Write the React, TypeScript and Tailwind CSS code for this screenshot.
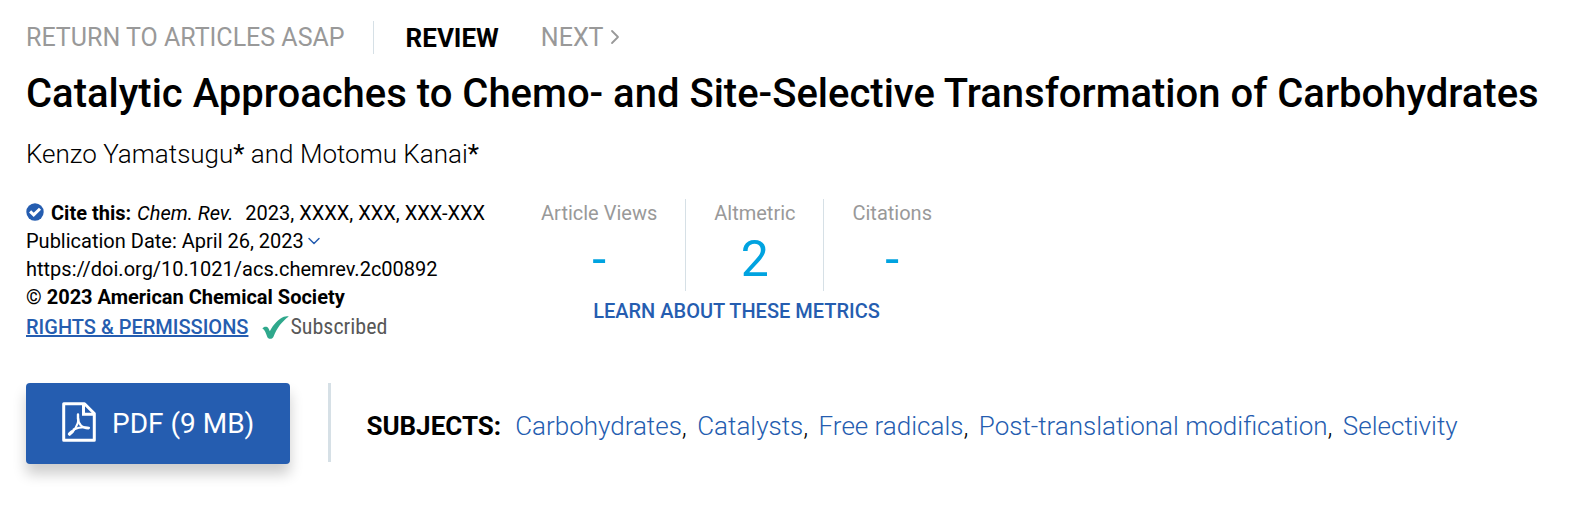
import { ChevronDown, ChevronRight } from "lucide-react";

const subjects = [
  "Carbohydrates",
  "Catalysts",
  "Free radicals",
  "Post-translational modification",
  "Selectivity",
];

const metrics = [
  { label: "Article Views", value: "-" },
  { label: "Altmetric", value: "2" },
  { label: "Citations", value: "-" },
];

const CiteIcon = () => (
  <svg viewBox="0 0 18 18" className="mb-0.5 size-[18px]" aria-hidden="true">
    <circle cx="9" cy="9" r="8.7" fill="#255db0" />
    <path d="M4.1 8.4 7.7 11.900 14 5.700" fill="none" stroke="#fff" strokeWidth="3" />
  </svg>
);

const CheckIcon = () => (
  <svg viewBox="0 0 27 23" className="h-[23px] w-[27px]" aria-hidden="true">
    <path
      d="M.4 12.4C1.6 10.8 3.4 10.2 5.2 11c1.2.7 2 2.4 2.6 4.2C11.500 8.500 16.500 2.900 21.800.8c1.500-.6 3.200-.8 5-.4C20.200 5 14.800 12 11.600 20.400c-.6 1.700-1.800 2.300-3.400 2.300-1.500 0-2.400-.5-3-2C4 17 2.800 13.800.4 12.400Z"
      fill="#2fa88c"
    />
  </svg>
);

const PdfIcon = () => (
  <svg viewBox="0 0 34 40" className="mb-1 h-10 w-[34px]" fill="none" stroke="#fff" aria-hidden="true">
    <path d="M2.500 1.700H22.500L32.300 11.500V38.300H1.700V1.700Z" strokeWidth="3" strokeLinejoin="round" />
    <path d="M21.500 2V12.300H32" strokeWidth="3" />
    <path d="M16 12.500V17C16.400 21.500 19.500 26 26.500 26.300" strokeWidth="2.400" strokeLinecap="round" />
    <path d="M16.400 17C16.200 23 12 29.500 7.500 32.500" strokeWidth="2" strokeLinecap="round" />
    <path d="M11.500 27.500C17 25.200 22 24.700 27 25.800" strokeWidth="2" strokeLinecap="round" />
    <path d="M7.500 32 10 29.800" strokeWidth="3.400" strokeLinecap="round" />
  </svg>
);

const App = () => {
  return (
    <main className="bg-white px-[26px] pt-[21px] pb-11 font-['Roboto',sans-serif] text-black">
      {/* Issue navigation */}
      <nav className="flex h-[33px] items-center text-[25px] leading-8 text-[#999]">
        <a href="#articles">RETURN TO ARTICLES ASAP</a>
        <span className="ml-7 h-full w-px bg-[#d6e0e6]" />
        <span className="ml-8 text-[26px] font-bold text-black">REVIEW</span>
        <a href="#next" className="ml-[42px] flex items-center">
          NEXT
          <ChevronRight className="mb-0.5 size-6" strokeWidth={1.8} />
        </a>
      </nav>

      <h1 className="mt-4 text-[40px] leading-12 font-medium">
        Catalytic Approaches to Chemo- and Site-Selective Transformation of Carbohydrates
      </h1>

      <p className="mt-5 text-[26px] leading-8 font-light">
        Kenzo Yamatsugu<a href="#kenzo" className="font-normal">*</a> and Motomu Kanai
        <a href="#motomu" className="font-normal">*</a>
      </p>

      <div className="mt-[29px] flex flex-wrap items-start gap-x-14 gap-y-6">
        {/* Citation */}
        <div className="text-[20px] leading-7">
          <div className="flex items-center">
            <CiteIcon />
            <span className="ml-[7px] font-bold">Cite this:</span>
            <i className="ml-1.5">Chem. Rev.</i>
            <span className="ml-3">2023, XXXX, XXX, XXX-XXX</span>
          </div>
          <div className="flex items-center">
            Publication Date: April 26, 2023
            <button type="button" aria-label="Publication history" className="text-[#255db0]">
              <ChevronDown className="size-5" strokeWidth={1.8} />
            </button>
          </div>
          <div>
            <a href="https://doi.org/10.1021/acs.chemrev.2c00892">
              https://doi.org/10.1021/acs.chemrev.2c00892
            </a>
          </div>
          <div className="font-bold">© 2023 American Chemical Society</div>
          <div className="flex items-center leading-8">
            <a href="#rights" className="font-medium text-[#255db0] underline">
              RIGHTS &amp; PERMISSIONS
            </a>
            <span className="ml-3.5 flex items-center text-[#585858]">
              <CheckIcon />
              <span className="ml-px font-['Roboto_Condensed','Liberation_Sans_Narrow','Roboto',sans-serif] text-[22px]">
                Subscribed
              </span>
            </span>
          </div>
        </div>

        {/* Metrics */}
        <div className="flex flex-col items-center">
          <dl className="flex divide-x divide-[#d6e0e6] text-center">
            {metrics.map((metric) => (
              <div key={metric.label} className="h-[92px] px-7 first:pl-0 last:pr-0">
                <dt className="text-[20px] leading-7 text-[#999]">{metric.label}</dt>
                <dd className="text-[50px] leading-16 text-[#00a3e0]">{metric.value}</dd>
              </div>
            ))}
          </dl>
          <a href="#metrics" className="mt-1.5 text-[20px] leading-7 font-medium text-[#255db0]">
            LEARN ABOUT THESE METRICS
          </a>
        </div>
      </div>

      {/* Download and subjects */}
      <div className="mt-10 flex items-start">
        <button
          type="button"
          className="flex h-[81px] shrink-0 items-center gap-4 rounded bg-[#255db0] px-9 text-[28px] text-white shadow-[0_10px_14px_rgba(0,0,0,0.2)]"
        >
          <PdfIcon />
          PDF (9 MB)
        </button>
        <div className="ml-[38px] min-h-[79px] border-l-3 border-[#d6e0e6] pt-[27px] pl-[35px] text-[26px] leading-8 font-light">
          <b className="mr-3.5 font-bold">SUBJECTS:</b>
          {subjects.map((subject, i) => (
            <span key={subject} className="mr-1">
              <a href="#subject" className="text-[#255db0]">{subject}</a>
              {i < subjects.length - 1 && ", "}
            </span>
          ))}
        </div>
      </div>
    </main>
  );
};

export default App;
